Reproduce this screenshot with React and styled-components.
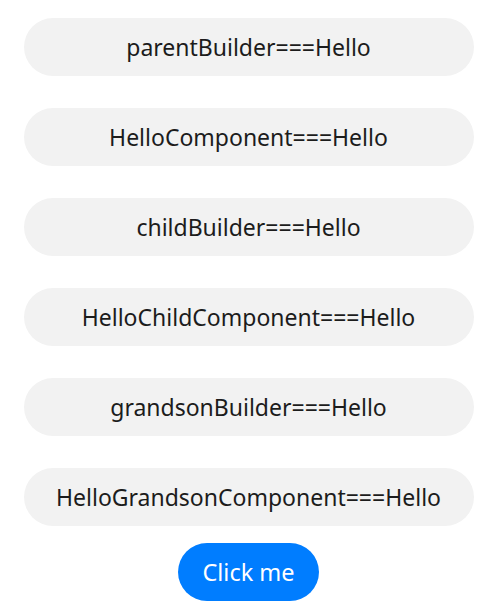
import styled, { createGlobalStyle } from 'styled-components';

const GlobalStyle = createGlobalStyle`
    html, body {
        margin: 0;
        padding: 0;
        background: #ffffff;
    }
`;

const Page = styled.div`
    width: 497px;
    height: 615px;
    display: flex;
    flex-direction: column;
    align-items: center;
    padding-top: 18px;
    box-sizing: border-box;
    font-family: "Noto Sans", "Open Sans", sans-serif;
`;

const List = styled.div`
    display: flex;
    flex-direction: column;
    gap: 32px;
    width: 450px;
`;

const Row = styled.div`
    height: 58px;
    border-radius: 29px;
    background: #f2f2f2;
    display: flex;
    align-items: center;
    justify-content: center;
    font-size: 23px;
    color: #1c1c1c;
`;

const Button = styled.button`
    margin-top: 17px;
    width: 141px;
    height: 58px;
    border: none;
    border-radius: 29px;
    background: #007dff;
    color: #ffffff;
    font-family: inherit;
    font-size: 23.5px;
    cursor: pointer;
`;

const labels = [
    'parentBuilder===Hello',
    'HelloComponent===Hello',
    'childBuilder===Hello',
    'HelloChildComponent===Hello',
    'grandsonBuilder===Hello',
    'HelloGrandsonComponent===Hello',
];

const App = () => {
    return (
        <Page>
            <GlobalStyle />
            <List>
                {labels.map((label) => (
                    <Row key={label}>{label}</Row>
                ))}
            </List>
            <Button>Click me</Button>
        </Page>
    );
};

export default App;
